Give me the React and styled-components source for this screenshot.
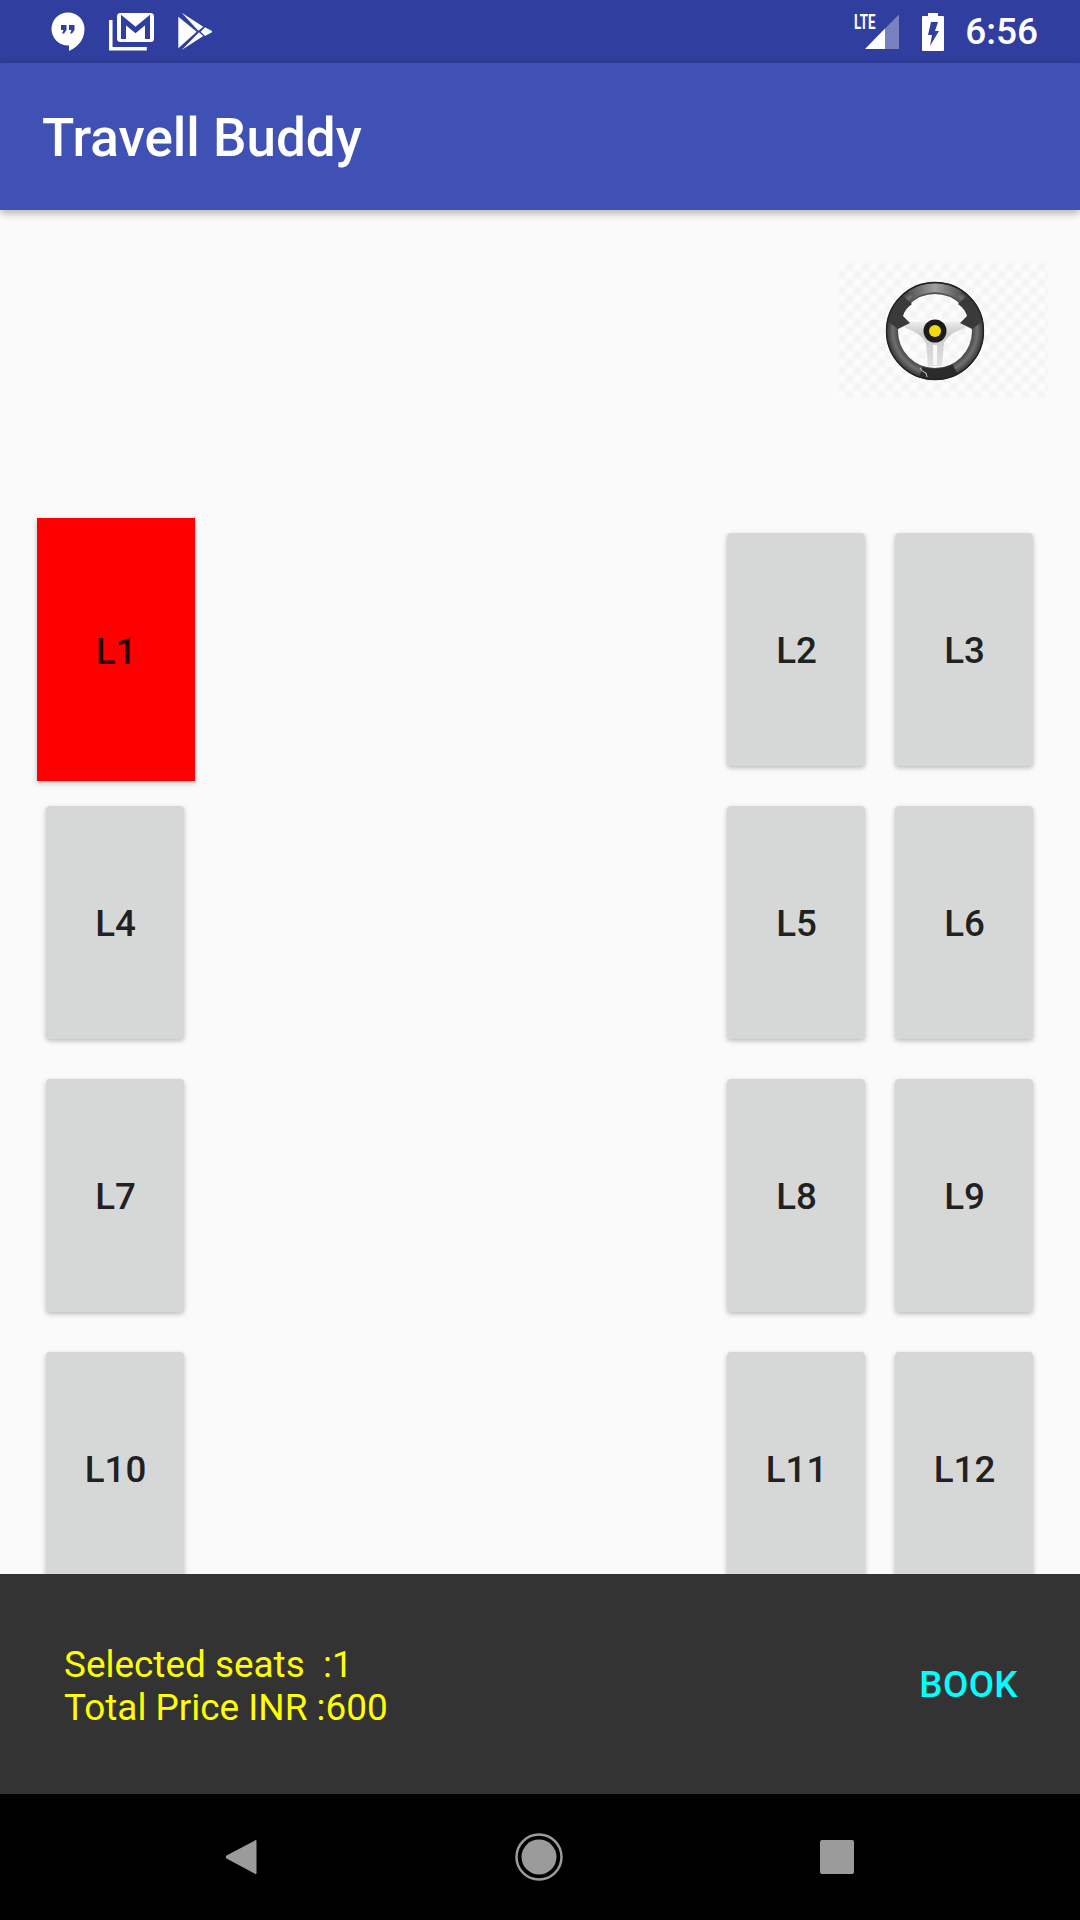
import React from "react";
import styled, { createGlobalStyle } from "styled-components";

const GlobalStyle = createGlobalStyle`
  html, body {
    margin: 0;
    padding: 0;
    background: #fafafa;
    font-family: "Roboto", "Liberation Sans", sans-serif;
  }
`;

const Screen = styled.div`
  display: flex;
  flex-direction: column;
  width: 1080px;
  height: 1920px;
  overflow: hidden;
`;

const StatusBar = styled.div`
  display: flex;
  align-items: center;
  justify-content: space-between;
  flex: 0 0 63px;
  padding: 0 42px 0 51px;
  background: #303f9f;
  color: #fff;
`;

const StatusGroup = styled.div`
  display: flex;
  align-items: center;
  gap: ${(p) => p.$gap}px;
`;

const NetworkIcon = styled.div`
  position: relative;
  width: 46px;
  height: 38px;
  margin-right: 22px;
`;

const LteLabel = styled.span`
  position: absolute;
  top: 0;
  left: 0;
  font-size: 19.5px;
  line-height: 20px;
  font-weight: 700;
  transform: scaleX(0.68);
  transform-origin: left center;
`;

const Clock = styled.span`
  font-size: 37px;
  font-weight: 500;
  margin-left: 21px;
  line-height: 40px;
`;

const AppBar = styled.header`
  position: relative;
  z-index: 2;
  display: flex;
  align-items: center;
  flex: 0 0 147px;
  padding: 2px 0 0 42px;
  box-sizing: border-box;
  background: #3f51b5;
  box-shadow: 0 3px 8px rgba(0, 0, 0, 0.3);
`;

const Title = styled.h1`
  margin: 0;
  font-size: 53px;
  font-weight: 500;
  color: #fff;
`;

const SeatArea = styled.main`
  flex: 1;
  min-height: 0;
  overflow: hidden;
  background: #fafafa;
  padding: 53px 36px 0 37px;
`;

const SteeringRow = styled.div`
  display: flex;
  justify-content: flex-end;
  margin: 0 -4px 120px 0;
`;

const Steering = styled.div`
  display: flex;
  width: 210px;
  height: 135px;
  background-color: #fcfcfc;
  background-image: repeating-conic-gradient(#f5f5f5 0 25%, #fcfcfc 0 50%);
  background-size: 16px 16px;
`;

const SeatGrid = styled.div`
  display: grid;
  grid-template-columns: 158px 1fr 158px 158px;
  grid-auto-rows: 263px;
  gap: 10px;
`;

const Seat = styled.button`
  grid-column: ${(p) => p.$column};
  margin: ${(p) => (p.$selected ? "0" : "15px 11px 15px 9px")};
  padding: ${(p) => (p.$selected ? "3px 0 0" : "2px 0 0 1px")};
  border: 0;
  border-radius: ${(p) => (p.$selected ? "0" : "4px")};
  background: ${(p) => (p.$selected ? "#ff0000" : "#d6d7d7")};
  box-shadow: 0 2px 5px rgba(0, 0, 0, 0.25);
  color: rgba(0, 0, 0, 0.87);
  font-family: inherit;
  font-size: 36.75px;
  font-weight: 500;
`;

const BottomBar = styled.footer`
  position: relative;
  z-index: 2;
  display: flex;
  align-items: center;
  justify-content: space-between;
  flex: 0 0 220px;
  box-sizing: border-box;
  padding: 0 62px 0 64px;
  background: #333333;
`;

const Summary = styled.div`
  padding-top: 3px;
  font-size: 36.9px;
  line-height: 43px;
  color: #ffff00;
  white-space: pre;
`;

const BookButton = styled.button`
  padding: 0;
  border: 0;
  background: none;
  color: #00ffff;
  font-family: inherit;
  font-size: 36.75px;
  font-weight: 500;
  letter-spacing: 0.4px;
`;

const NavBar = styled.nav`
  display: flex;
  align-items: center;
  justify-content: center;
  gap: 250px;
  flex: 0 0 126px;
  box-sizing: border-box;
  padding-right: 2px;
  background: #000;
`;

const seats = [
  ["L1", "L2", "L3"],
  ["L4", "L5", "L6"],
  ["L7", "L8", "L9"],
  ["L10", "L11", "L12"],
];
const seatColumns = [1, 3, 4];

function HangoutsIcon() {
  return (
    <svg width="34" height="40" viewBox="0 0 34 40">
      <path
        fill="#fff"
        d="M17 .5a16.5 16.5 0 0 0 0 33h1v5.5c6-3 15.5-9 15.5-22A16.5 16.5 0 0 0 17 .5z"
      />
      <path
        fill="#303f9f"
        d="M10 13h5.5v5l-2.500 3.500h-2l1.500-3.500H10zM18 13h5.500v5L21 21.500h-2l1.500-3.500H18z"
      />
    </svg>
  );
}

function MailStackIcon() {
  return (
    <svg width="46" height="39" viewBox="0 0 46 39">
      <path fill="none" stroke="#fff" strokeWidth="3.5" d="M1.800 8v28.800h36" />
      <rect x="8" y="1" width="37" height="29" rx="3.500" fill="#fff" />
      <path fill="none" stroke="#303f9f" strokeWidth="5" strokeMiterlimit="4" d="M14.500 27V8l12 10 12-10v19" />
    </svg>
  );
}

function PlayIcon() {
  return (
    <svg width="34" height="39" viewBox="0 0 34 39" fill="#fff">
      <path d="M.3 4.700v31.600l18.400-16.600z" />
      <path d="M3.700.7l21.600 14-5 4z" />
      <path d="M3.700 38l21.600-14-4.300-3.700z" />
      <path d="M27 15.300l6.500 3.500c.7.5.7 1.300 0 1.800L27 24l-4.300-4.300z" />
    </svg>
  );
}

function SignalIcon() {
  return (
    <svg width="36" height="38" viewBox="0 0 36 38" style={{ position: "absolute", right: 0, top: 0 }}>
      <path fill="#fff" fillOpacity="0.35" d="M21 15.500L35 1.500V36H21z" />
      <path fill="#fff" d="M21 15.500V36H1z" />
    </svg>
  );
}

function BatteryIcon() {
  return (
    <svg width="22" height="38" viewBox="0 0 22 38">
      <path fill="#fff" d="M6 0h10v3h5a1 1 0 0 1 1 1v33a1 1 0 0 1-1 1H1a1 1 0 0 1-1-1V4a1 1 0 0 1 1-1h5z" />
      <path fill="#303f9f" d="M9 9h7l-3 9h4L8 33l2-11H6z" />
    </svg>
  );
}

function SteeringWheel() {
  return (
    <svg width="210" height="135" viewBox="0 0 210 135">
      <defs>
        <linearGradient id="spoke" x1="0" y1="0" x2="0" y2="1">
          <stop offset="0" stopColor="#eeeeee" />
          <stop offset="0.3" stopColor="#c9c9c9" />
          <stop offset="1" stopColor="#e2e2e2" />
        </linearGradient>
        <radialGradient id="rim" gradientUnits="userSpaceOnUse" cx="0" cy="0" r="49">
          <stop offset="0.74" stopColor="#444" />
          <stop offset="0.86" stopColor="#707070" />
          <stop offset="1" stopColor="#303030" />
        </radialGradient>
        <linearGradient id="rimTop" x1="0" y1="0" x2="1" y2="0">
          <stop offset="0" stopColor="#5a5a5a" />
          <stop offset="0.5" stopColor="#a0a0a0" />
          <stop offset="1" stopColor="#5a5a5a" />
        </linearGradient>
      </defs>
      <g transform="translate(97 68)">
        <path
          fill="url(#spoke)"
          d="M-30-10Q-12-8 0-9Q12-8 30-10L30-3Q15 1 9 12L7 35H-7L-9 12Q-15 1-30-3Z"
        />
        <rect x="-2" y="14" width="4" height="20" fill="#f8f8f8" />
        <circle r="43" fill="none" stroke="url(#rim)" strokeWidth="12" />
        <path d="M-24-36A43 43 0 0 1 24-36" fill="none" stroke="url(#rimTop)" strokeWidth="9" />
        <path fill="#3a3a3a" d="M-32-35L-23-27Q-30-22-32-15L-25-8L-37-2L-48-10A49 49 0 0 1-32-35Z" />
        <path fill="#3a3a3a" d="M32-35L23-27Q30-22 32-15L25-8L37-2L48-10A49 49 0 0 0 32-35Z" />
        <path d="M-14 41A43 43 0 0 0 20 38" fill="none" stroke="#2b2b2b" strokeWidth="11" />
        <path fill="none" stroke="#ddd" strokeWidth="0.9" d="M-15 37Q-13 41-9 42L-8 46" />
        <circle r="48.500" fill="none" stroke="#222" strokeWidth="1.300" />
        <circle r="11.500" fill="#1c1c1c" />
        <circle r="6" fill="#f5d90e" />
      </g>
    </svg>
  );
}

function BackIcon() {
  return (
    <svg width="48" height="48" viewBox="0 0 48 48">
      <path fill="#9b9b9b" d="M38 7.500c.8-.8 1.500-.5 1.500.6v32c0 1.100-.7 1.400-1.500.6L9.500 25.500c-1-.9-1-2 0-2.900z" />
    </svg>
  );
}

function HomeIcon() {
  return (
    <svg width="48" height="48" viewBox="0 0 48 48">
      <circle cx="24" cy="24" r="22.500" fill="none" stroke="#9b9b9b" strokeWidth="2.500" />
      <circle cx="24" cy="24" r="17.500" fill="#9b9b9b" />
    </svg>
  );
}

function RecentIcon() {
  return (
    <svg width="48" height="48" viewBox="0 0 48 48">
      <rect x="7" y="7" width="34" height="34" rx="2" fill="#9b9b9b" />
    </svg>
  );
}

export default function App() {
  return (
    <Screen>
      <GlobalStyle />
      <StatusBar>
        <StatusGroup $gap={23.5}>
          <HangoutsIcon />
          <MailStackIcon />
          <PlayIcon />
        </StatusGroup>
        <StatusGroup $gap={0}>
          <NetworkIcon>
            <LteLabel>LTE</LteLabel>
            <SignalIcon />
          </NetworkIcon>
          <BatteryIcon />
          <Clock>6:56</Clock>
        </StatusGroup>
      </StatusBar>
      <AppBar>
        <Title>Travell Buddy</Title>
      </AppBar>
      <SeatArea>
        <SteeringRow>
          <Steering>
            <SteeringWheel />
          </Steering>
        </SteeringRow>
        <SeatGrid>
          {seats.map((row) =>
            row.map((label, i) => (
              <Seat key={label} $column={seatColumns[i]} $selected={label === "L1"}>
                {label}
              </Seat>
            ))
          )}
        </SeatGrid>
      </SeatArea>
      <BottomBar>
        <Summary>{"Selected seats  :1\nTotal Price INR :600"}</Summary>
        <BookButton>BOOK</BookButton>
      </BottomBar>
      <NavBar>
        <BackIcon />
        <HomeIcon />
        <RecentIcon />
      </NavBar>
    </Screen>
  );
}
